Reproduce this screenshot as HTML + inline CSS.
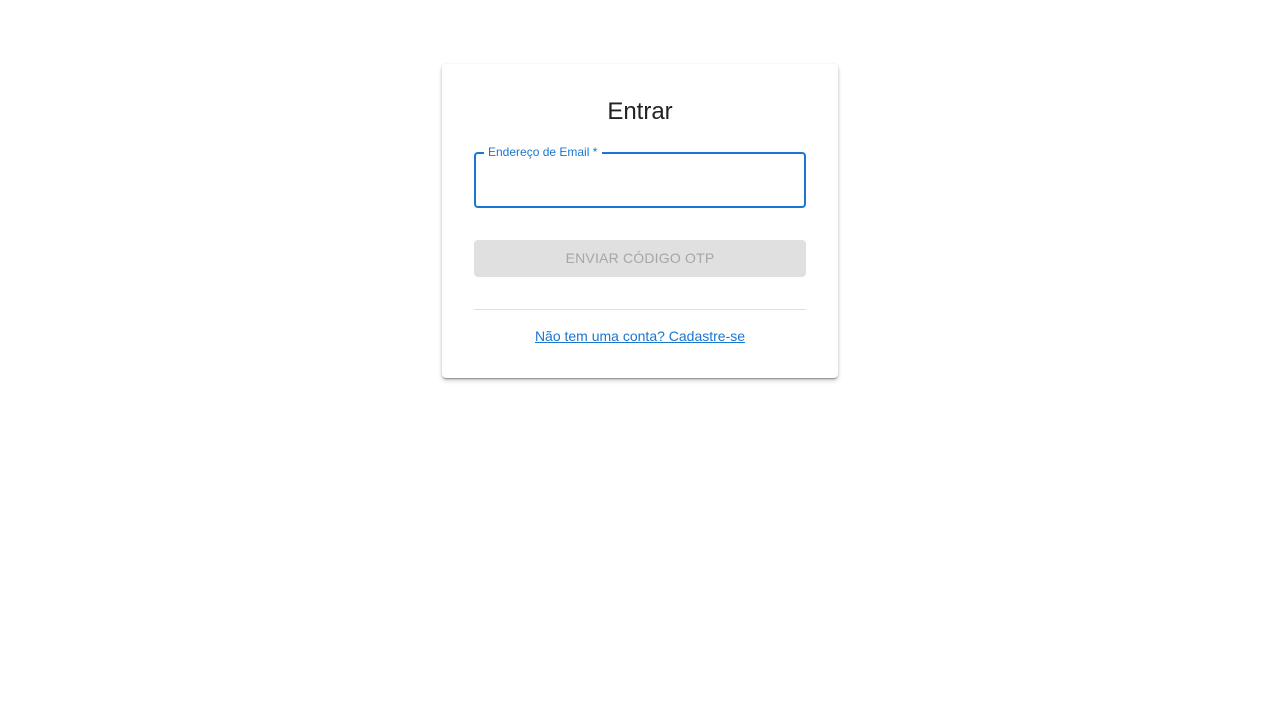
<!DOCTYPE html>
<html><head><meta charset="utf-8"><style>
html,body{margin:0;padding:0;background:#fff;width:1280px;height:720px;font-family:"Liberation Sans",sans-serif;}
.card{position:absolute;left:442px;top:64px;width:396px;height:314px;background:#fff;border-radius:4px;box-shadow:0 2px 1px -1px rgba(0,0,0,.2),0 1px 1px 0 rgba(0,0,0,.14),0 1px 3px 0 rgba(0,0,0,.12),0 3px 5px rgba(0,0,0,.15);}
h1{position:absolute;top:97px;left:0;width:1280px;margin:0;text-align:center;font-weight:400;font-size:24px;color:#222;line-height:30px;}
.field{position:absolute;left:474px;top:152px;width:328px;height:52px;border:2px solid #1976d2;border-radius:4px;}
.lbl{position:absolute;left:484px;top:145px;background:#fff;padding:0 5px 0 4px;font-size:12px;color:#1976d2;line-height:14px;}
.btn{position:absolute;left:474px;top:240px;width:332px;height:37px;background:#e0e0e0;border-radius:4px;color:#a6a6a6;font-size:14px;letter-spacing:.2px;text-align:center;line-height:37px;}
.hr{position:absolute;left:474px;top:309px;width:332px;height:1px;background:#e0e0e0;}
.link{position:absolute;left:0;width:1280px;top:327px;text-align:center;font-size:14px;color:#1976d2;text-decoration:underline;line-height:18px;}
</style></head><body>
<div class="card"></div>
<h1>Entrar</h1>
<div class="field"></div>
<div class="lbl">Endereço de Email *</div>
<div class="btn">ENVIAR CÓDIGO OTP</div>
<div class="hr"></div>
<div class="link">Não tem uma conta? Cadastre-se</div>
</body></html>
